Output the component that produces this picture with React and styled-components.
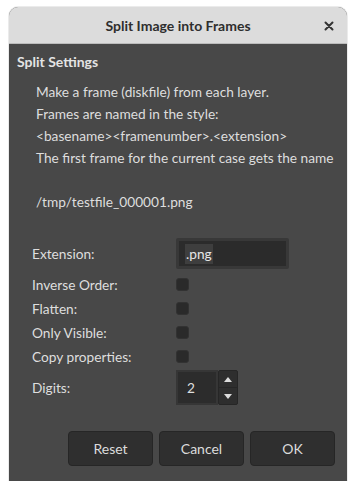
import React from "react";
import styled, { createGlobalStyle } from "styled-components";

const Global = createGlobalStyle`
  html, body { margin: 0; padding: 0; background: #ffffff; }
  body { font-family: Lato, "Noto Sans", sans-serif; }
`;

const Window = styled.div`
  margin: 7px 0 0 9px;
  width: 338px;
  height: 474px;
  display: flex;
  flex-direction: column;
  border-radius: 9px 9px 0 0;
  overflow: hidden;
  background: #484848;
  box-shadow: 0 0 0 1px rgba(0,0,0,0.08);
`;

const TitleBar = styled.div`
  position: relative;
  height: 37px;
  flex: 0 0 37px;
  background: #dcdcdc;
  border-bottom: 1px solid #bcbcbc;
  display: flex;
  align-items: center;
  justify-content: center;
  font-weight: 700;
  font-size: 14px;
  color: #2e2e2e;
  box-sizing: border-box;
`;

const CloseBtn = styled.span`
  position: absolute;
  right: 11px;
  top: 12px;
  width: 14px;
  height: 14px;
  display: flex;
  align-items: center;
  justify-content: center;
`;

const Body = styled.div`
  flex: 1;
  display: flex;
  flex-direction: column;
  padding: 9px 12px 0 8px;
  color: #dedede;
  font-size: 13.7px;
`;

const SectionTitle = styled.div`
  font-weight: 700;
  font-size: 14px;
  line-height: 18px;
  color: #e4e4e4;
`;

const Info = styled.div`
  margin-top: 10px;
  padding-left: 19px;
  line-height: 22px;
  white-space: pre;
`;

const Form = styled.div`
  margin-top: 25px;
  display: flex;
  flex-direction: column;
`;

const Row = styled.div`
  display: grid;
  grid-template-columns: 159px auto;
  align-items: center;
  height: ${(p) => p.$h}px;
  margin-top: ${(p) => p.$mt || 0}px;
`;

const Label = styled.span`
  padding-left: 15px;
`;

const Entry = styled.div`
  width: 113px;
  height: 31px;
  box-sizing: border-box;
  background: #2b2b2b;
  border: 3px solid #383838;
  border-radius: 2px;
  display: flex;
  align-items: center;
  padding-left: 6px;
`;

const Selected = styled.span`
  background: #3e3e3e;
  color: #e6e6e6;
  line-height: 20px;
  padding: 0 1px;
`;

const Check = styled.span`
  width: 13px;
  height: 13px;
  border-radius: 3px;
  background: #2a2a2a;
  border: 1px solid #323232;
  box-sizing: border-box;
`;

const Spin = styled.div`
  display: flex;
  height: 35px;
`;

const SpinEntry = styled.div`
  width: 42px;
  box-sizing: border-box;
  background: #2c2c2c;
  border: 2px solid #363636;
  display: flex;
  align-items: center;
  padding-left: 9px;
`;

const SpinButtons = styled.div`
  width: 18px;
  display: flex;
  flex-direction: column;
  background: #2e2e2e;
  border: 1px solid #262626;
  border-radius: 2px;
`;

const SpinBtn = styled.div`
  flex: 1;
  display: flex;
  align-items: center;
  justify-content: center;
  border-top: ${(p) => (p.$down ? "1px solid #262626" : "none")};
`;

const Footer = styled.div`
  margin-top: 26px;
  display: flex;
  justify-content: flex-end;
  gap: 6px;
`;

const Button = styled.button`
  width: 85px;
  height: 35px;
  background: #2f2f2f;
  border: 1px solid #262626;
  border-radius: 4px;
  color: #dcdcdc;
  font-family: inherit;
  font-size: 14px;
  padding: 0;
`;

const Tri = ({ up }) => (
  <svg width="8" height="5" viewBox="0 0 8 5">
    <path d={up ? "M0 5 L4 0 L8 5 Z" : "M0 0 L4 5 L8 0 Z"} fill="#dcdcdc" />
  </svg>
);

export default function App() {
  return (
    <>
      <Global />
      <Window>
        <TitleBar>
          Split Image into Frames
          <CloseBtn>
            <svg width="10" height="10" viewBox="0 0 10 10">
              <path d="M1.5 1.5 L8.5 8.5 M8.5 1.5 L1.5 8.5" stroke="#333" strokeWidth="2" strokeLinecap="round" />
            </svg>
          </CloseBtn>
        </TitleBar>
        <Body>
          <SectionTitle>Split Settings</SectionTitle>
          <Info>
            {"Make a frame (diskfile) from each layer.\nFrames are named in the style:\n<basename><framenumber>.<extension>\nThe first frame for the current case gets the name\n\n/tmp/testfile_000001.png"}
          </Info>
          <Form>
            <Row $h={31}>
              <Label>Extension:</Label>
              <Entry><Selected>.png</Selected></Entry>
            </Row>
            <Row $h={24} $mt={3}>
              <Label>Inverse Order:</Label>
              <Check />
            </Row>
            <Row $h={24}>
              <Label>Flatten:</Label>
              <Check />
            </Row>
            <Row $h={24}>
              <Label>Only Visible:</Label>
              <Check />
            </Row>
            <Row $h={24}>
              <Label>Copy properties:</Label>
              <Check />
            </Row>
            <Row $h={35} $mt={2}>
              <Label>Digits:</Label>
              <Spin>
                <SpinEntry>2</SpinEntry>
                <SpinButtons>
                  <SpinBtn><Tri up /></SpinBtn>
                  <SpinBtn $down><Tri /></SpinBtn>
                </SpinButtons>
              </Spin>
            </Row>
          </Form>
          <Footer>
            <Button>Reset</Button>
            <Button>Cancel</Button>
            <Button>OK</Button>
          </Footer>
        </Body>
      </Window>
    </>
  );
}
